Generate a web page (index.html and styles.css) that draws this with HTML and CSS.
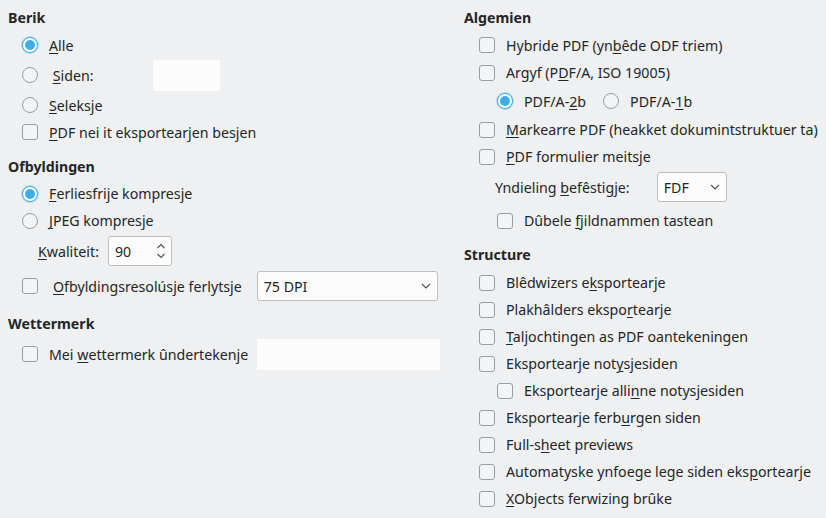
FILE: index.html
```html
<!DOCTYPE html>
<html>
<head>
<meta charset="utf-8">
<link rel="stylesheet" href="styles.css">
</head>
<body>
<div class="page">
  <div class="col left">
    <div class="heading h-first">Berik</div>
    <div class="row r30 ind1"><span class="radio on"></span><span class="lbl"><u>A</u>lle</span></div>
    <div class="row r30 ind1"><span class="radio"></span><span class="lbl siden">&nbsp;<u>S</u>iden:</span><span class="field pages"></span></div>
    <div class="row r30 ind1"><span class="radio"></span><span class="lbl"><u>S</u>eleksje</span></div>
    <div class="row r24 ind1"><span class="check"></span><span class="lbl"><u>P</u>DF nei it eksportearjen besjen</span></div>

    <div class="heading h-ofb">Ofbyldingen</div>
    <div class="row r29 ind1"><span class="radio on"></span><span class="lbl"><u>F</u>erliesfrije kompresje</span></div>
    <div class="row r25 ind1"><span class="radio"></span><span class="lbl"><u>J</u>PEG kompresje</span></div>
    <div class="row r30 quality"><span class="plain"><u>K</u>waliteit:</span>
      <span class="field spin"><span>90</span>
        <svg class="spin-arrows" width="10" height="18" viewBox="0 0 10 18"><path d="M1.5 6 L5 2.5 L8.5 6" fill="none" stroke="#4d4d4d" stroke-width="1.1"/><path d="M1.5 12 L5 15.5 L8.5 12" fill="none" stroke="#4d4d4d" stroke-width="1.1"/></svg>
      </span>
    </div>
    <div class="row r30 ind1 resol"><span class="check"></span><span class="lbl wide"><u>O</u>fbyldingsresolúsje ferlytsje</span>
      <span class="field combo dpi"><span>75 DPI</span>
        <svg class="chev" width="10" height="6" viewBox="0 0 10 6"><path d="M1 1 L5 5 L9 1" fill="none" stroke="#4d4d4d" stroke-width="1.1"/></svg>
      </span>
    </div>

    <div class="heading h-wet">Wettermerk</div>
    <div class="row r30 ind1 wm"><span class="check"></span><span class="lbl">Mei <u>w</u>ettermerk ûndertekenje</span><span class="field wmtext"></span></div>
  </div>

  <div class="col right">
    <div class="heading h-first">Algemien</div>
    <div class="row r28 ind1 first-r"><span class="check"></span><span class="lbl">Hybride PDF (yn<u>b</u>êde ODF triem)</span></div>
    <div class="row r27 ind1"><span class="check"></span><span class="lbl">Argyf (P<u>D</u>F/A, ISO 19005)</span></div>
    <div class="row r30 ind2"><span class="radio on"></span><span class="lbl">PDF/A-<u>2</u>b</span><span class="radio rb2"></span><span class="lbl">PDF/A-<u>1</u>b</span></div>
    <div class="row r27 ind1"><span class="check"></span><span class="lbl"><u>M</u>arkearre PDF (heakket dokumintstruktuer ta)</span></div>
    <div class="row r27 ind1"><span class="check"></span><span class="lbl"><u>P</u>DF formulier meitsje</span></div>
    <div class="row r30 yndieling"><span class="plain ynd">Yndieling <u>b</u>efêstigje:</span>
      <span class="field combo fdf"><span>FDF</span>
        <svg class="chev" width="10" height="6" viewBox="0 0 10 6"><path d="M1 1 L5 5 L9 1" fill="none" stroke="#4d4d4d" stroke-width="1.1"/></svg>
      </span>
    </div>
    <div class="row r27 ind2 dub"><span class="check"></span><span class="lbl">Dûbele <u>f</u>jildnammen tastean</span></div>

    <div class="heading h-str">Structure</div>
    <div class="row r27 ind1 str-first"><span class="check"></span><span class="lbl">Blêdwizers e<u>k</u>sportearje</span></div>
    <div class="row r27 ind1"><span class="check"></span><span class="lbl">Plakhâlders ekspo<u>r</u>tearje</span></div>
    <div class="row r27 ind1"><span class="check"></span><span class="lbl"><u>T</u>aljochtingen as PDF oantekeningen</span></div>
    <div class="row r27 ind1"><span class="check"></span><span class="lbl">Eksportearje not<u>y</u>sjesiden</span></div>
    <div class="row r27 ind2"><span class="check"></span><span class="lbl">Eksportearje alli<u>n</u>ne notysjesiden</span></div>
    <div class="row r27 ind1"><span class="check"></span><span class="lbl">Eksportearje ferb<u>u</u>rgen siden</span></div>
    <div class="row r27 ind1"><span class="check"></span><span class="lbl">Full-s<u>h</u>eet previews</span></div>
    <div class="row r27 ind1"><span class="check"></span><span class="lbl">Automatyske ynfoege lege siden eks<u>p</u>ortearje</span></div>
    <div class="row r27 ind1"><span class="check"></span><span class="lbl"><u>X</u>Objects ferwizing brûke</span></div>
  </div>
</div>
</body>
</html>
```

FILE: styles.css
```css
html, body {
  margin: 0;
  padding: 0;
  background: #eff0f1;
}
body {
  font-family: "Noto Sans", "DejaVu Sans", sans-serif;
  font-size: 14.2px;
  color: #232627;
  width: 826px;
  height: 518px;
  overflow: hidden;
}
u {
  text-decoration: underline;
  text-decoration-thickness: 1px;
  text-underline-offset: 2px;
}
.page {
  display: flex;
}
.col {
  display: flex;
  flex-direction: column;
}
.left {
  width: 464px;
  padding-left: 8px;
  box-sizing: border-box;
}
.right {
  width: 362px;
}
.heading {
  font-weight: bold;
  height: 24px;
  line-height: 24px;
}
.h-first { margin-top: 6px; }
.h-ofb { margin-top: 11px; }
.h-wet { margin-top: 11px; }
.h-str { margin-top: 9px; }
.row {
  display: flex;
  align-items: center;
  white-space: nowrap;
}
.r24 { height: 24px; }
.r25 { height: 25px; }
.r27 { height: 27px; }
.r28 { height: 28px; }
.r29 { height: 29px; }
.r30 { height: 30px; }
.left .ind1 { padding-left: 14px; }
.right .ind1 { padding-left: 15px; }
.right .ind2 { padding-left: 33px; }
.first-r { margin-top: 1px; }
.str-first { margin-top: 2px; }

.check, .radio {
  flex: none;
  width: 16px;
  height: 16px;
  box-sizing: border-box;
  border: 1px solid #9a9c9e;
  background: #f3f4f5;
}
.check { border-radius: 3px; }
.radio { border-radius: 50%; }
.radio.on {
  border-color: #3daee9;
  background: #ffffff;
  box-shadow: 0 0 0 1px rgba(61,174,233,0.35);
  position: relative;
}
.radio.on::after {
  content: "";
  position: absolute;
  left: 2px; top: 2px;
  width: 10px; height: 10px;
  border-radius: 50%;
  background: #3daee9;
}
.lbl { margin-left: 11px; }
.rb2 { margin-left: 17px; }

.field {
  display: flex;
  align-items: center;
  box-sizing: border-box;
  background: #fcfcfc;
  height: 30px;
}
.pages {
  width: 67px;
  height: 31px;
  margin-left: 60px;
  align-self: flex-start;
}
.quality { padding-left: 30px; margin-top: 3px; }
.spin {
  width: 64px;
  margin-left: 9px;
  border: 1px solid #bcbebf;
  border-radius: 3px;
  padding-left: 6px;
  justify-content: space-between;
  padding-right: 5px;
}
.resol { margin-top: 5px; }
.wide { margin-left: 15px; }
.combo {
  border: 1px solid #bcbebf;
  border-radius: 3px;
  justify-content: space-between;
  padding-left: 6px;
  padding-right: 6px;
}
.dpi {
  width: 181px;
  margin-left: 15px;
}
.wm { margin-top: 3px; }
.wmtext {
  width: 183px;
  height: 31px;
  margin-left: 9px;
}
.yndieling { padding-left: 31px; margin-top: 2px; }
.fdf {
  width: 70px;
  margin-left: 27px;
}
.dub { margin-top: 5px; }
```
